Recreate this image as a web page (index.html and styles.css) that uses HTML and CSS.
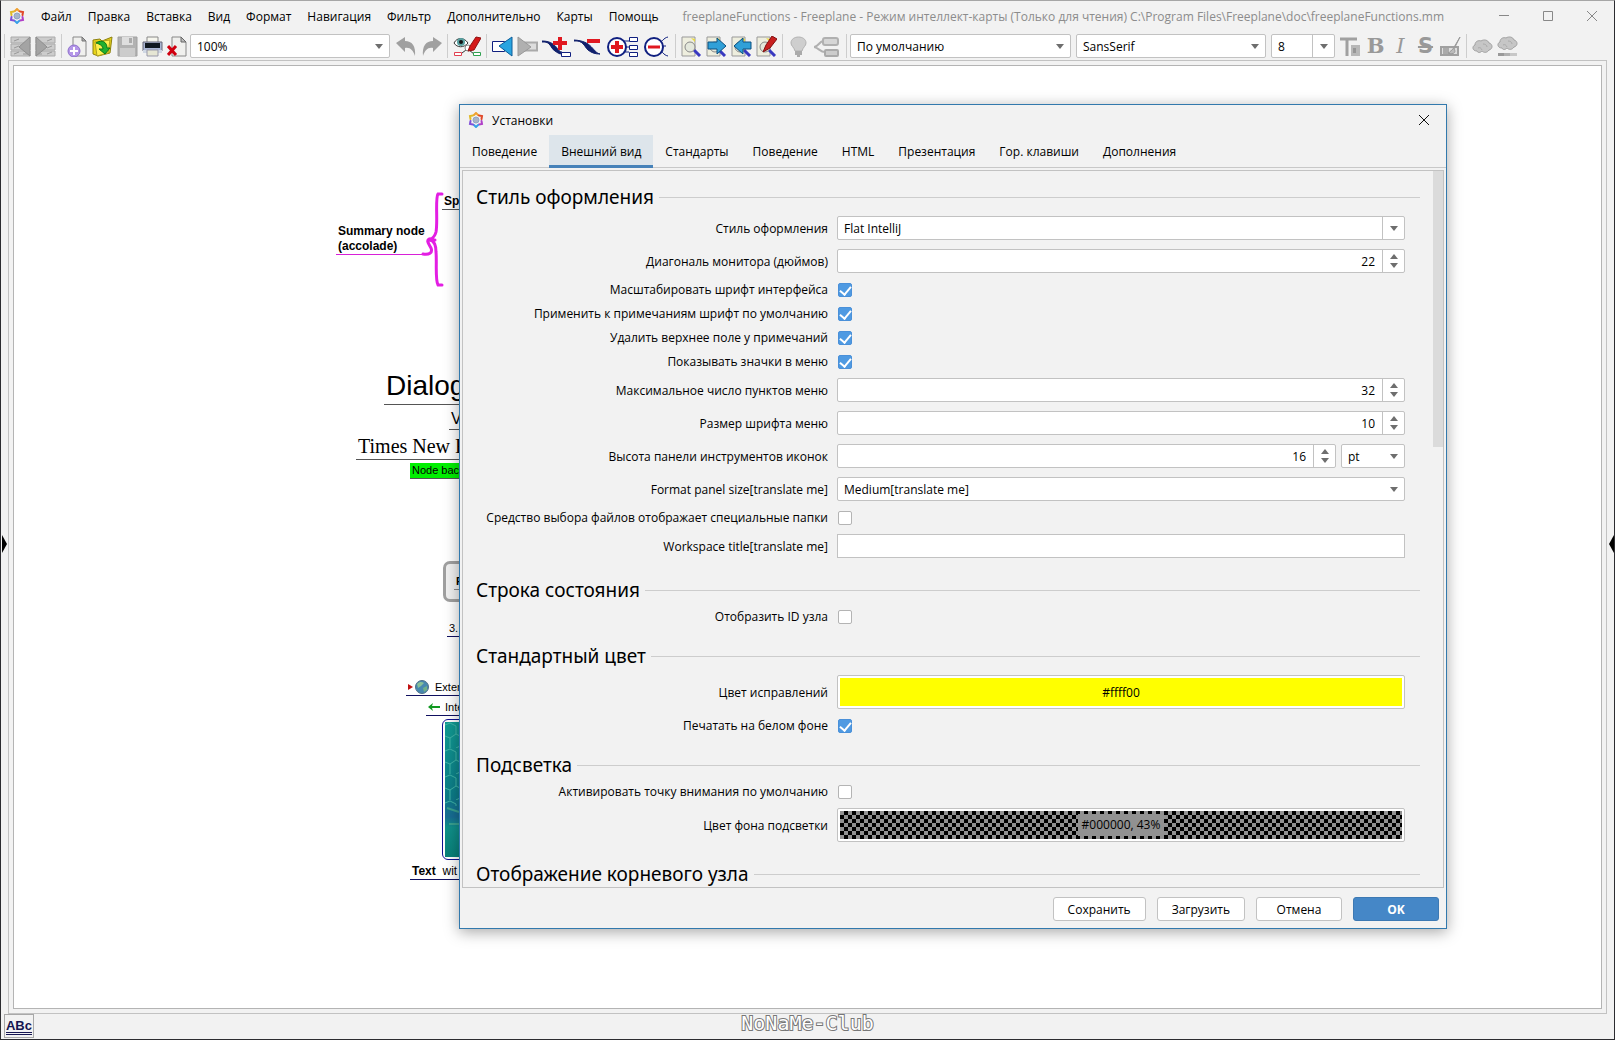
FILE: index.html
```html
<!DOCTYPE html>
<html lang="ru">
<head>
  <meta charset="UTF-8" />
  <meta name="viewport" content="width=device-width, initial-scale=1.0"/>
  <title>freeplaneFunctions - Freeplane</title>
  <link rel="stylesheet" href="styles.css">
</head>
<body>
  <!-- Shared shapes -->
  <svg class="defs" width="0" height="0" aria-hidden="true">
    <symbol id="logo" viewBox="0 0 16 16">
      <g fill="none" stroke-width="2" stroke-linecap="round">
        <path d="M6 3l2-2 2 2" stroke="#f0a030"/>
        <path d="M11 3.500l3 .5-.5 3" stroke="#e04828"/>
        <path d="M13.500 9l.5 3-3 .5" stroke="#b040c8"/>
        <path d="M10 13l-2 2-2-2" stroke="#38a0e8"/>
        <path d="M5 12.500L2 12l.5-3" stroke="#8050d8"/>
        <path d="M2.500 7L2 4l3-.5" stroke="#e0b828"/>
      </g>
      <circle cx="8" cy="8" r="3" fill="#a8b4c8" stroke="#8fa4c4"/>
    </symbol>
    <symbol id="lens" viewBox="0 0 21 21">
      <path d="M1 1h13v19H1z" fill="#eeeede" stroke="#999"/>
      <path d="M13 14l6 6" stroke="#3838c0" stroke-width="3"/>
      <circle cx="9" cy="11" r="5" fill="#e4e8dc" stroke="#888"/>
      <path d="M10 2l4 1v3z" fill="#e8d840"/>
    </symbol>
    <symbol id="cloud" viewBox="0 0 21 15">
      <path d="M5 12c-5 0-5-5-2-6 0-4 4-5 6-4 3-2 7-1 8 2 4 1 4 6 0 7-2 3-5 3-7 1-2 2-4 2-5 0z" fill="#c6c6c6" stroke="#a0a0a0" stroke-width="1"/>
      <path d="M6 9c2-1 3 0 4 2M11 5c2 0 4 1 4 3" fill="none" stroke="#aaa"/>
    </symbol>
  </svg>

  <div class="window">
    <header class="menubar">
      <svg class="logo" width="16" height="16"><use href="#logo"/></svg>
      <nav class="menu">
        <a href="#">Файл</a>
        <a href="#">Правка</a>
        <a href="#">Вставка</a>
        <a href="#">Вид</a>
        <a href="#">Формат</a>
        <a href="#">Навигация</a>
        <a href="#">Фильтр</a>
        <a href="#">Дополнительно</a>
        <a href="#">Карты</a>
        <a href="#">Помощь</a>
      </nav>
      <div class="title">freeplaneFunctions - Freeplane - Режим интеллект-карты (Только для чтения) C:\Program Files\Freeplane\doc\freeplaneFunctions.mm</div>
      <div class="winbuttons">
        <button aria-label="Свернуть"><svg width="12" height="12"><path d="M1 5.500h10" stroke="#888"/></svg></button>
        <button aria-label="Развернуть"><svg width="12" height="12"><path d="M1.500 1.500h9v9h-9z" fill="none" stroke="#888"/></svg></button>
        <button aria-label="Закрыть"><svg width="12" height="12"><path d="M1 1l10 10M11 1L1 11" stroke="#888"/></svg></button>
      </div>
    </header>

    <div class="toolbar">
      <span class="sep"></span>
      <button aria-label="Предыдущая карта"><svg width="21" height="21"><path d="M1 1h19v6H1zM1 8h19v6H1zM1 15h19v5H1z" fill="#ccc" stroke="#aaa"/><path d="M4 5l5-2M4 12l5-2M4 18l5-2M13 18h6" stroke="#999"/><path d="M20 1v19L9 11z" fill="#a4a4a4" stroke="#8e8e8e"/></svg></button>
      <button aria-label="Следующая карта"><svg width="21" height="21"><path d="M1 1h19v6H1zM1 8h19v6H1zM1 15h19v5H1z" fill="#ccc" stroke="#aaa"/><path d="M12 5l5-2M12 12l5-2M12 18l5-2M2 18h5" stroke="#999"/><path d="M1 1v19l11-9z" fill="#a4a4a4" stroke="#8e8e8e"/></svg></button>
      <span class="sep"></span>
      <button aria-label="Новая карта"><svg width="21" height="21"><path d="M6 1h9l4 4v15H6z" fill="#f0f0ee" stroke="#888"/><path d="M15 1v4h4z" fill="#aaa" stroke="#777"/><circle cx="7" cy="15" r="6" fill="#b496e8" stroke="#8e70cc"/><path d="M7 11v8M3 15h8" stroke="#fff" stroke-width="2"/></svg></button>
      <button aria-label="Открыть"><svg width="21" height="21"><path d="M1 4l7-1 2 2 10-4-2 16-12 3-5-2z" fill="#e8d418" stroke="#8c8010"/><path d="M3 6l15-2-2 13-11 3z" fill="#fff050" stroke="#b0a020"/><path d="M4 7c6-4 11-1 11 5h3l-5 6-6-5h4c0-3-3-5-7-6z" fill="#20b030" stroke="#087818"/></svg></button>
      <button aria-label="Сохранить карту"><svg width="21" height="21"><path d="M1 1h19v19H1z" fill="#b2b2b2" stroke="#a0a0a0"/><path d="M5 1h11v8H5z" fill="#dedede"/><path d="M12 2h3v5h-3z" fill="#aaa"/><path d="M3 12h15v8H3z" fill="#ccc"/></svg></button>
      <button aria-label="Печать"><svg width="21" height="21"><path d="M5 1h11v6H5z" fill="#f6f6ee" stroke="#888"/><path d="M1 6h19v9H1z" fill="#aab6d4" stroke="#667"/><path d="M3 7h15v5H3z" fill="#101820"/><path d="M1 14h19v3H1z" fill="#d0d8e4"/><path d="M5 14h11v6H5z" fill="#e6e6d4" stroke="#99a"/></svg></button>
      <button aria-label="Закрыть карту"><svg width="21" height="21"><path d="M5 1h9l5 5v14H5z" fill="#f0f0ee" stroke="#888"/><path d="M14 1v5h5z" fill="#bbb" stroke="#666"/><path d="M1 10l8 9M9 10l-8 9" stroke="#d00010" stroke-width="3"/></svg></button>
      <span class="select zoom"><select aria-label="Масштаб"><option>100%</option></select></span>
      <button aria-label="Отменить"><svg width="21" height="21"><path d="M0 7l9-6v4c7 0 11 5 10 15-2-6-5-9-10-8v4z" fill="#a0a0a0"/></svg></button>
      <button aria-label="Повторить"><svg width="21" height="21"><path d="M21 7l-9-6v4C5 5 1 10 2 20c2-6 5-9 10-8v4z" fill="#a0a0a0"/></svg></button>
      <span class="sep"></span>
      <button class="wide" aria-label="Фильтр"><svg width="28" height="21"><path d="M1 7c3-6 10-6 14 0-4 5-11 5-14 0z" fill="#fff" stroke="#333"/><circle cx="8" cy="6" r="4" fill="#58a0a0"/><circle cx="8" cy="6" r="2" fill="#111"/><path d="M9 17l4-3h3l5 4" fill="none" stroke="#333"/><circle cx="15" cy="12" r="3" fill="#fff" stroke="#888"/><path d="M23 1l5 1-7 12-6 1 2-5z" fill="#d41818" stroke="#901010"/><path d="M1.500 16.500h7v3h-7z" fill="#fff" stroke="#e04050"/><path d="M20.500 16.500h7v3h-7z" fill="#fff" stroke="#30a050"/></svg></button>
      <span class="sep"></span>
      <button aria-label="Назад"><svg width="21" height="21"><path d="M.5 5.500h12v10H.5z" fill="#fff" stroke="#102080"/><path d="M20 1v19L7 10z" fill="#28a4e0" stroke="#0c5c98"/></svg></button>
      <button aria-label="Вперёд"><svg width="21" height="21"><path d="M8 6.500h12v8H8z" fill="#ddd" stroke="#aaa" stroke-width="2"/><path d="M1 1v19l13-9z" fill="#b0b0b0" stroke="#999"/></svg></button>
      <button class="wide" aria-label="Новый узел"><svg width="29" height="21"><path d="M0 6c9-1 8 6 13 9 3 2 4 3 7 3v-2c-5 0-5-11-20-11z" fill="#10206c" stroke="#10206c"/><path d="M18 1v13M11 7h14" stroke="#e01820" stroke-width="4"/><path d="M19.500 16.500h9v4h-9z" fill="#fff" stroke="#102080"/></svg></button>
      <button class="wide" aria-label="Удалить узел"><svg width="28" height="21"><path d="M0 5c9-1 10 5 14 9 4 3 7 4 12 4-8-2-7-13-26-14z" fill="#10206c" stroke="#10206c"/><path d="M13 5h13" stroke="#e01820" stroke-width="4"/></svg></button>
      <button class="wider" aria-label="Развернуть всё"><svg width="31" height="21"><path d="M14 5h8M18 11h5M14 16h8" stroke="#102080"/><circle cx="10" cy="11" r="9" fill="#fff" stroke="#102080" stroke-width="2"/><path d="M10 5v12M4 11h12" stroke="#e01820" stroke-width="4"/><path d="M22.500 1.500h8v4h-8zM22.500 9.500h8v4h-8zM22.500 16.500h8v4h-8z" fill="#fff" stroke="#102080"/></svg></button>
      <button class="wide" aria-label="Свернуть всё"><svg width="24" height="21"><path d="M15 6c4 0 4-4 9-5M18 10h4M15 15c4 0 4 4 9 5" fill="none" stroke="#102080"/><circle cx="10" cy="11" r="9" fill="#fff" stroke="#102080" stroke-width="2"/><path d="M4 11h12" stroke="#e01820" stroke-width="3"/></svg></button>
      <span class="sep"></span>
      <button aria-label="Найти"><svg width="21" height="21"><use href="#lens"/></svg></button>
      <button aria-label="Найти следующее"><svg width="21" height="21"><use href="#lens"/><path d="M2 6h9V2l9 8-9 8v-5H2z" fill="#30a0d8" stroke="#0c5080"/></svg></button>
      <button aria-label="Найти предыдущее"><svg width="21" height="21"><use href="#lens"/><path d="M20 6h-8V2l-9 8 9 8v-5h8z" fill="#30a0d8" stroke="#0c5080"/></svg></button>
      <button aria-label="Заменить"><svg width="21" height="21"><use href="#lens"/><path d="M16 0l5 3-7 9-7 4 3-7z" fill="#c82020" stroke="#801010"/></svg></button>
      <span class="sep"></span>
      <button aria-label="Подсказка"><svg width="21" height="21"><path d="M7 15C6 11 3 10 3 7c0-8 15-8 15 0 0 3-3 4-4 8z" fill="#cecece" stroke="#b2b2b2"/><path d="M7 16h7M7 18h7M9 20h3" stroke="#aaa" stroke-width="2"/></svg></button>
      <button class="wide" aria-label="Связь"><svg width="26" height="21"><rect x="9" y="2" width="15" height="7" rx="2" fill="#d6d6d6" stroke="#b0b0b0" stroke-width="2"/><path d="M9 5C5 6 5 10 0 11c5 1 6 5 11 5" fill="none" stroke="#b0b0b0" stroke-width="2"/><rect x="11" y="14" width="13" height="6" rx="1" fill="#ccc" stroke="#aaa" stroke-width="2"/></svg></button>
      <span class="sep"></span>
      <span class="select style"><select aria-label="Стиль"><option>По умолчанию</option></select></span>
      <span class="select font"><select aria-label="Шрифт"><option>SansSerif</option></select></span>
      <span class="select size split"><select aria-label="Размер"><option>8</option></select></span>
      <button aria-label="Цвет текста"><svg width="21" height="21"><path d="M0 3h17M7 3v17" stroke="#a0a0a0" stroke-width="3"/><path d="M11 9h9v11h-9z" fill="#b8b8b8"/><path d="M13 12h3v5h-3z" fill="#969696"/></svg></button>
      <button class="letter bold" aria-label="Полужирный">B</button>
      <button class="letter italic" aria-label="Курсив">I</button>
      <button class="letter strike" aria-label="Зачёркнутый">S</button>
      <button aria-label="Очистить формат"><svg width="21" height="21"><path d="M1 11h17v8H1z" fill="#ddd" stroke="#a0a0a0" stroke-width="2"/><path d="M3 12h6v6H3z" fill="#aaa"/><path d="M20 1l-6 12c3 4-2 6-6 4 3-1 3-3 5-4z" fill="#bcbcbc" stroke="#999"/></svg></button>
      <span class="sep"></span>
      <button aria-label="Облако"><svg width="21" height="15"><use href="#cloud"/></svg></button>
      <button aria-label="Цвет облака"><svg width="21" height="21"><use href="#cloud" width="21" height="15"/><path d="M1 17h6v3H1z" fill="#999"/><path d="M7 17h6v3H7z" fill="#b0b0b0"/><path d="M13 17h7v3h-7z" fill="#c8c8c8"/></svg></button>
    </div>

    <main class="frame">
      <!-- Mind map, free canvas -->
      <div class="map">
        <div class="node summary">Summary node<br>(accolade)</div>
        <svg class="brace" width="34" height="98" viewBox="0 0 34 98"><path d="M31 4h-4c-3 4 0 28-2 38-1 4-3 6-6 8 4 1 6 6 6 12 1 10-1 28 2 33h4M12 64c6 1 10-1 8-6-2-4-5-7-2-9 2-1 3 1 6 1" fill="none" stroke="#e31ee3" stroke-width="3" stroke-linecap="round"/></svg>
        <div class="node special">Sp</div>
        <div class="node dialog-font">Dialog</div>
        <div class="node verdana">V</div>
        <div class="node times">Times New R</div>
        <div class="node back">Node bac</div>
        <div class="node fork"><span>F</span></div>
        <div class="node three">3.</div>
        <div class="node external">
          <svg width="22" height="14" viewBox="0 0 22 14"><path d="M0 4v6l5-3z" fill="#c01010"/><circle cx="14" cy="7" r="6.500" fill="#4888b0" stroke="#507088"/><path d="M9 4c3-3 5-2 7-1l-3 3-3 2z" fill="#88c098"/><path d="M15 8l4-2v4l-3 2z" fill="#70b088"/></svg>
          Exter
        </div>
        <div class="node internal">
          <svg width="12" height="8" viewBox="0 0 12 8"><path d="M0 4l5-4-1 3h8v2H4l1 3z" fill="#109820"/></svg>
          Inte
        </div>
        <div class="node image">
          <svg width="100%" height="100%">
            <defs>
              <pattern id="hex" width="20" height="26" patternUnits="userSpaceOnUse"><path d="M0 3l5-2 6 3v8l-6 4-5-2M5 16v10M11 12l6 3v8l-6 3M17 15l3-1" fill="none" stroke="#40b4a8"/></pattern>
              <linearGradient id="sea" x1="0" y1="0" x2="0" y2="1"><stop offset="0" stop-color="#109a92"/><stop offset=".55" stop-color="#0c7c88"/><stop offset=".7" stop-color="#186c94"/><stop offset=".78" stop-color="#10908a"/><stop offset="1" stop-color="#088078"/></linearGradient>
            </defs>
            <rect width="100%" height="100%" fill="url(#sea)"/>
            <rect width="100%" height="84" fill="url(#hex)"/>
            <path d="M2 86l12 4M4 102h14" stroke="#38a090" stroke-width="2"/>
          </svg>
        </div>
        <div class="node text"><b>Text</b>&nbsp; wit</div>
      </div>
    </main>
    <svg class="handle handle-left" width="5" height="18"><path d="M0 0l5 9-5 9z"/></svg>
    <svg class="handle handle-right" width="5" height="18"><path d="M5 0L0 9l5 9z"/></svg>

    <footer class="status">
      <button class="abc">ABc</button>
      <span class="watermark">NoNaMe-Club</span>
    </footer>
  </div>

  <!-- Settings dialog -->
  <section class="dialog" role="dialog" aria-labelledby="dialog-title">
    <div class="dialog-head">
      <svg width="16" height="16"><use href="#logo"/></svg>
      <span id="dialog-title">Установки</span>
      <button aria-label="Закрыть"><svg width="12" height="12"><path d="M1 1l10 10M11 1L1 11" stroke="#111"/></svg></button>
    </div>
    <div class="tabs" role="tablist">
      <button role="tab">Поведение</button>
      <button role="tab" class="active" aria-selected="true">Внешний вид</button>
      <button role="tab">Стандарты</button>
      <button role="tab">Поведение</button>
      <button role="tab">HTML</button>
      <button role="tab">Презентация</button>
      <button role="tab">Гор. клавиши</button>
      <button role="tab">Дополнения</button>
    </div>

    <div class="pane">
      <form class="settings">
        <h2>Стиль оформления</h2>
        <label for="laf">Стиль оформления</label>
        <span class="select split"><select id="laf"><option>Flat IntelliJ</option></select></span>

        <label for="diag">Диагональ монитора (дюймов)</label>
        <span class="spin"><input type="text" id="diag" value="22"><i></i></span>

        <label for="scale">Масштабировать шрифт интерфейса</label>
        <input type="checkbox" id="scale" checked>
        <label for="notefont">Применить к примечаниям шрифт по умолчанию</label>
        <input type="checkbox" id="notefont" checked>
        <label for="notemargin">Удалить верхнее поле у примечаний</label>
        <input type="checkbox" id="notemargin" checked>
        <label for="menuicons">Показывать значки в меню</label>
        <input type="checkbox" id="menuicons" checked>

        <label for="maxitems">Максимальное число пунктов меню</label>
        <span class="spin"><input type="text" id="maxitems" value="32"><i></i></span>
        <label for="menufont">Размер шрифта меню</label>
        <span class="spin"><input type="text" id="menufont" value="10"><i></i></span>
        <label for="iconheight">Высота панели инструментов иконок</label>
        <span class="pair">
          <span class="spin"><input type="text" id="iconheight" value="16"><i></i></span>
          <span class="select unit"><select aria-label="Единица"><option>pt</option></select></span>
        </span>
        <label for="panelsize">Format panel size[translate me]</label>
        <span class="select"><select id="panelsize"><option>Medium[translate me]</option></select></span>
        <label for="folders">Средство выбора файлов отображает специальные папки</label>
        <input type="checkbox" id="folders">
        <label for="workspace">Workspace title[translate me]</label>
        <input type="text" class="field" id="workspace">

        <h2>Строка состояния</h2>
        <label for="nodeid">Отобразить ID узла</label>
        <input type="checkbox" id="nodeid">

        <h2>Стандартный цвет</h2>
        <label for="editcolor">Цвет исправлений</label>
        <button type="button" class="color" id="editcolor"><span class="yellow">#ffff00</span></button>
        <label for="printwhite">Печатать на белом фоне</label>
        <input type="checkbox" id="printwhite" checked>

        <h2>Подсветка</h2>
        <label for="spot">Активировать точку внимания по умолчанию</label>
        <input type="checkbox" id="spot">
        <label for="spotcolor">Цвет фона подсветки</label>
        <button type="button" class="color" id="spotcolor"><span class="checker"><em>#000000, 43%</em></span></button>

        <h2>Отображение корневого узла</h2>
      </form>
      <div class="scrollbar"><div class="thumb"></div></div>
    </div>

    <div class="actions">
      <button>Сохранить</button>
      <button>Загрузить</button>
      <button>Отмена</button>
      <button class="primary">OK</button>
    </div>
  </section>
</body>
</html>
```
FILE: styles.css
```css
* {
  box-sizing: border-box;
}

body {
  margin: 0;
  height: 100vh;
  overflow: hidden;
  position: relative;
  background-color: #f2f2f2;
  color: #000;
  font-family: "Open Sans", "Noto Sans", sans-serif;
  font-size: 12px;
}

button, input, select {
  font: inherit;
  color: inherit;
  margin: 0;
}

button {
  border: 0;
  padding: 0;
  background: none;
}

svg {
  display: block;
  flex: none;
}

.defs {
  position: absolute;
}

.window {
  height: 100vh;
  display: flex;
  flex-direction: column;
  border: 1px solid #2c2c30;
  border-top-color: #a6a6a6;
}

/* Menu bar */
.menubar {
  height: 31px;
  display: flex;
  align-items: center;
  padding: 0 10px 1px 8px;
}

.menu {
  display: flex;
  gap: 16px;
  margin-left: 16px;
}

.menu a {
  color: #000;
  text-decoration: none;
}

.title {
  flex: 1;
  min-width: 0;
  margin-left: 24px;
  color: #8c8c8c;
  white-space: nowrap;
}

.winbuttons {
  display: flex;
  gap: 32px;
  padding-right: 6px;
}

/* Toolbar */
.toolbar {
  height: 28px;
  display: flex;
  align-items: center;
}

.toolbar button {
  width: 25px;
  height: 25px;
  flex: none;
  display: flex;
  align-items: center;
  justify-content: center;
}

.toolbar .wide {
  width: 32px;
}

.toolbar .wider {
  width: 36px;
}

.sep {
  flex: none;
  width: 1px;
  height: 24px;
  margin: 0 3px;
  background-color: #cdcdcd;
}

.toolbar .letter {
  color: #999;
  font-family: "DejaVu Serif", serif;
  font-size: 21px;
  line-height: 24px;
}

.toolbar .bold, .toolbar .strike {
  font-weight: bold;
}

.toolbar .italic {
  font-style: italic;
}

.toolbar .strike {
  font-family: "DejaVu Sans", sans-serif;
  text-decoration: line-through;
}

/* Drop-downs and spinners */
.select {
  position: relative;
  display: block;
  height: 24px;
}

.select select {
  appearance: none;
  width: 100%;
  height: 24px;
  padding: 0 24px 0 6px;
  border: 1px solid #c2c2c2;
  border-radius: 2px;
  background-color: #fff;
}

.select::after {
  content: "";
  position: absolute;
  right: 7px;
  top: 10px;
  border: 4px solid transparent;
  border-top: 5px solid #6e6e6e;
  border-bottom: 0;
}

.split::before {
  content: "";
  position: absolute;
  right: 22px;
  top: 1px;
  bottom: 1px;
  width: 1px;
  background-color: #c2c2c2;
}

.zoom {
  width: 200px;
  margin-right: 4px;
}

.style {
  width: 221px;
  margin-right: 5px;
}

.font {
  width: 190px;
  margin-right: 5px;
}

.size {
  width: 64px;
  margin-right: 3px;
}

.spin {
  flex: 1;
  display: flex;
  height: 24px;
  border: 1px solid #c2c2c2;
  border-radius: 2px;
  background-color: #fff;
}

.spin input {
  flex: 1;
  min-width: 0;
  border: 0;
  padding: 0 7px;
  background: none;
  text-align: right;
}

.spin i {
  width: 22px;
  display: flex;
  flex-direction: column;
  align-items: center;
  justify-content: center;
  gap: 4px;
  border-left: 1px solid #c2c2c2;
}

.spin i::before, .spin i::after {
  content: "";
  border: 4px solid transparent;
}

.spin i::before {
  border-top: 0;
  border-bottom: 5px solid #6e6e6e;
}

.spin i::after {
  border-bottom: 0;
  border-top: 5px solid #6e6e6e;
}

/* Canvas */
.frame {
  flex: 1;
  display: flex;
  margin: 0 7px;
  padding: 4px;
  border: 1px solid #c2c2c2;
}

.map {
  flex: 1;
  position: relative;
  overflow: hidden;
  border: 1px solid #b4b4b4;
  background-color: #fff;
}

.node {
  position: absolute;
  min-width: 60px;
  white-space: nowrap;
  font-family: "Liberation Sans", Arial, sans-serif;
  font-size: 11px;
  line-height: 15px;
  padding: 0 2px;
  border-bottom: 1px solid #555;
}

.summary {
  left: 322px;
  top: 158px;
  width: 89px;
  font-size: 12px;
  font-weight: bold;
  border-color: #d820d8;
}

.brace {
  position: absolute;
  left: 397px;
  top: 124px;
}

.special {
  left: 428px;
  top: 128px;
  font-size: 12px;
  font-weight: bold;
}

.dialog-font {
  left: 370px;
  top: 302px;
  font-size: 28px;
  line-height: 36px;
}

.verdana {
  left: 435px;
  top: 342px;
  font-size: 16px;
  line-height: 21px;
}

.times {
  left: 342px;
  top: 368px;
  font-family: "Liberation Serif", "Times New Roman", serif;
  font-size: 20px;
  line-height: 25px;
}

.back {
  left: 396px;
  top: 397px;
  background-color: #00f000;
}

.fork {
  left: 429px;
  top: 495px;
  width: 80px;
  height: 41px;
  padding: 10px 8px;
  border: 3px solid #a0a0a0;
  border-radius: 7px;
  background-color: #f0f0f0;
}

.fork span {
  display: block;
  padding-left: 2px;
  font-weight: bold;
  border-bottom: 1px solid #888;
}

.three, .external, .internal, .text {
  border-color: #101060;
}

.three {
  left: 433px;
  top: 555px;
}

.external, .internal {
  display: flex;
  align-items: center;
  gap: 5px;
}

.external {
  left: 392px;
  top: 613px;
  line-height: 16px;
}

.internal {
  left: 412px;
  top: 633px;
  line-height: 16px;
}

.image {
  left: 428px;
  top: 653px;
  width: 120px;
  height: 141px;
  padding: 2px;
  border: 1px solid #101090;
  border-radius: 6px;
}

.text {
  left: 396px;
  top: 798px;
  font-size: 12px;
}

.handle {
  position: absolute;
  top: 535px;
}

.handle-left {
  left: 2px;
}

.handle-right {
  right: 1px;
}

/* Status bar */
.status {
  height: 25px;
  display: flex;
  align-items: center;
  justify-content: center;
  position: relative;
}

.abc {
  position: absolute;
  left: 3px;
  top: 0;
  width: 30px;
  height: 24px;
  border: 1px solid #a8a8a8;
  color: #141450;
  font-family: "Liberation Sans", Arial, sans-serif;
  font-size: 13px;
  font-weight: bold;
  line-height: 16px;
  text-decoration: underline double;
  text-underline-offset: 2px;
}

.watermark {
  font-family: "DejaVu Sans Mono", monospace;
  font-size: 20px;
  line-height: 20px;
  color: #fff;
  -webkit-text-stroke: 2px #777;
  paint-order: stroke fill;
  padding-bottom: 8px;
}

/* Settings dialog */
.dialog {
  position: absolute;
  left: 459px;
  right: 168px;
  top: 104px;
  bottom: 111px;
  display: flex;
  flex-direction: column;
  border: 1px solid #3279ad;
  background-color: #f2f2f2;
  box-shadow: 0 3px 14px rgba(0, 0, 0, 0.35);
}

.dialog-head {
  height: 30px;
  display: flex;
  align-items: center;
  gap: 8px;
  padding: 0 16px 0 8px;
}

.dialog-head button {
  margin-left: auto;
}

.tabs {
  display: flex;
  height: 33px;
  border-bottom: 1px solid #c8c8c8;
}

.tabs button {
  height: 33px;
  padding: 2px 12px 0;
  border-bottom: 3px solid transparent;
}

.tabs .active {
  background-color: #dde5eb;
  border-color: #4682b9;
}

.pane {
  flex: 1;
  min-height: 0;
  display: flex;
  margin: 2px 2px 0 2px;
  border: 1px solid #c2c2c2;
  overflow: hidden;
}

.settings {
  flex: 1;
  display: grid;
  grid-template-columns: 352px 1fr;
  gap: 9px;
  align-content: start;
  align-items: center;
  padding: 16px 28px 0 13px;
}

.settings h2 {
  grid-column: 1 / -1;
  display: flex;
  align-items: center;
  gap: 5px;
  height: 20px;
  margin: 13px -15px 0 0;
  font-family: "Noto Sans", sans-serif;
  font-size: 19px;
  font-weight: normal;
  line-height: 20px;
  white-space: nowrap;
}

.settings h2:first-child {
  margin-top: 0;
}

.settings h2::after {
  content: "";
  flex: 1;
  height: 1px;
  background-color: #cdcdcd;
}

.settings label {
  line-height: 15px;
  text-align: right;
  white-space: nowrap;
}

.settings input[type="checkbox"] {
  appearance: none;
  width: 14px;
  height: 14px;
  margin-left: 1px;
  border: 1px solid #b4b4b4;
  border-radius: 2px;
  background-color: #fff;
}

.settings input[type="checkbox"]:checked {
  border-color: #4a90d9;
  background-color: #4f9ae2;
}

.settings input[type="checkbox"]:checked::after {
  content: "";
  display: block;
  width: 5px;
  height: 9px;
  margin: 0 auto;
  border: solid #fff;
  border-width: 0 2px 2px 0;
  transform: rotate(40deg);
}

.field {
  height: 24px;
  border: 1px solid #c2c2c2;
  background-color: #fff;
}

.pair {
  display: flex;
  gap: 5px;
}

.unit {
  width: 64px;
}

.color {
  display: flex;
  height: 34px;
  padding: 2px;
  border: 1px solid #c2c2c2;
  border-radius: 2px;
  background-color: #fff;
}

.color span {
  flex: 1;
  align-self: stretch;
  display: flex;
  align-items: center;
  justify-content: center;
}

.yellow {
  background-color: #ff0;
}

.checker {
  background: repeating-conic-gradient(#000 0 25%, #919191 0 50%) 0 0 / 8px 8px;
}

.checker em {
  padding: 0 4px;
  font-style: normal;
  line-height: 22px;
  background-color: #919191;
}

.scrollbar {
  width: 10px;
}

.thumb {
  height: 276px;
  background-color: #dbdbdb;
}

.actions {
  height: 40px;
  display: flex;
  justify-content: flex-end;
  gap: 11px;
  padding: 9px 7px 7px;
}

.actions button {
  min-width: 86px;
  height: 24px;
  padding: 0 14px;
  border: 1px solid #c2c2c2;
  border-radius: 3px;
  background-color: #fff;
}

.actions .primary {
  border-color: #3d79b3;
  background-color: #4587c7;
  color: #fff;
  font-weight: bold;
}
```
